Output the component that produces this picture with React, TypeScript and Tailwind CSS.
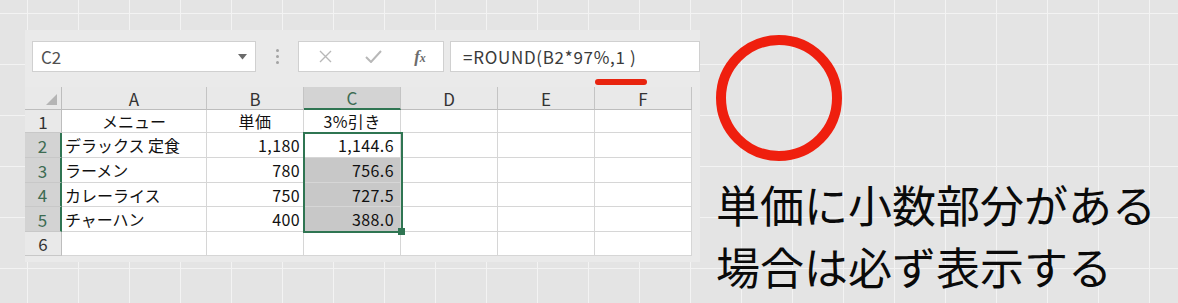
import React from "react";

const FONT = { fontFamily: '"Noto Sans CJK JP", "Noto Sans", sans-serif' };

type Row = { n: string; h: string; a: string; b: string; c: string };

const rows: Row[] = [
  { n: "1", h: "h-[23px]", a: "メニュー", b: "単価", c: "3%引き" },
  { n: "2", h: "h-[25px]", a: "デラックス 定食", b: "1,180", c: "1,144.6" },
  { n: "3", h: "h-[25px]", a: "ラーメン", b: "780", c: "756.6" },
  { n: "4", h: "h-[24px]", a: "カレーライス", b: "750", c: "727.5" },
  { n: "5", h: "h-[25px]", a: "チャーハン", b: "400", c: "388.0" },
  { n: "6", h: "h-[24px]", a: "", b: "", c: "" },
];

const cols = ["A", "B", "C", "D", "E", "F"];
const colW = ["w-[145px]", "w-[97px]", "w-[97px]", "w-[97px]", "w-[97px]", "w-[97px]"];

function Toolbar() {
  return (
    <div className="flex items-start h-[57px] pt-[11px] pl-[7px]">
      <div className="w-[224px] h-[31px] bg-white border border-[#d0d0d0] flex items-center justify-between pl-[8px] pr-[8px]">
        <span className="text-[17px] text-[#505050] leading-none">C2</span>
        <svg width="9" height="6" viewBox="0 0 9 6">
          <path d="M0 0 L9 0 L4.5 5.5 Z" fill="#6a6a6a" />
        </svg>
      </div>
      <div className="w-[42px] h-[31px] flex flex-col items-center justify-center gap-[3px]">
        <div className="w-[3px] h-[3px] rounded-full bg-[#a3a3a3]" />
        <div className="w-[3px] h-[3px] rounded-full bg-[#a3a3a3]" />
        <div className="w-[3px] h-[3px] rounded-full bg-[#a3a3a3]" />
      </div>
      <div className="w-[146px] h-[31px] bg-white border border-[#d0d0d0] flex items-center">
        <div className="w-[48px] flex justify-center pl-[4px]">
          <svg width="13" height="13" viewBox="0 0 13 13">
            <path d="M1 1 L12 12 M12 1 L1 12" stroke="#b8b8b8" strokeWidth="1.4" />
          </svg>
        </div>
        <div className="w-[48px] flex justify-center pl-[4px]">
          <svg width="17" height="13" viewBox="0 0 17 13">
            <path d="M1 7 L6 12 L16 1" stroke="#b8b8b8" strokeWidth="2" fill="none" />
          </svg>
        </div>
        <div className="w-[48px] flex justify-center pl-[2px]">
          <span
            className="italic text-[17px] text-[#6c6c6c] leading-none font-bold"
            style={{ fontFamily: '"Liberation Serif", serif' }}
          >
            f<span className="text-[12px]">x</span>
          </span>
        </div>
      </div>
      <div className="w-[6px]" />
      <div className="flex-1 h-[31px] bg-white border border-[#d0d0d0] flex items-center pl-[12px]">
        <span className="text-[17px] text-[#3a3a3a] leading-none tracking-[0.7px]">=ROUND(B2*97%,1 )</span>
      </div>
    </div>
  );
}

function Sheet() {
  return (
    <div className="relative">
      <div className="flex h-[23px]">
        <div className="w-[37px] h-full bg-[#e9e9e9] border-r border-b border-[#bdbdbd] relative">
          <svg className="absolute right-[4px] bottom-[4px]" width="11" height="11" viewBox="0 0 11 11">
            <path d="M11 0 L11 11 L0 11 Z" fill="#b5b5b5" />
          </svg>
        </div>
        {cols.map((c, i) => {
          const sel = c === "C";
          return (
            <div
              key={c}
              className={
                colW[i] +
                " h-full flex items-center justify-center text-[17px] leading-none border-r border-[#c4c4c4] " +
                (sel
                  ? "bg-[#d3d3d3] text-[#3d6b52] border-b-2 border-b-[#2f7552]"
                  : "bg-[#e9e9e9] text-[#333333] border-b border-b-[#bdbdbd]")
              }
            >
              {c}
            </div>
          );
        })}
      </div>
      {rows.map((r) => {
        const rowSel = ["2", "3", "4", "5"].includes(r.n);
        const header = r.n === "1";
        return (
          <div key={r.n} className={"flex " + r.h}>
            <div
              className={
                "w-[37px] h-full flex items-center justify-center text-[17px] leading-none border-b border-[#c8c8c8] " +
                (rowSel
                  ? "bg-[#d3d3d3] text-[#3d6b52] border-r-2 border-r-[#2f7552]"
                  : "bg-[#e9e9e9] text-[#333333] border-r border-r-[#bdbdbd]")
              }
            >
              {r.n}
            </div>
            <div
              className={
                "w-[145px] h-full bg-white border-r border-b border-[#d6d6d6] flex items-center text-[16px] text-[#111] " +
                (header ? "justify-center" : "pl-[3px]")
              }
            >
              {r.a}
            </div>
            <div
              className={
                "w-[97px] h-full bg-white border-r border-b border-[#d6d6d6] flex items-center text-[16px] text-[#111] tracking-[0.4px] " +
                (header ? "justify-center" : "justify-end pr-[3px]")
              }
            >
              {r.b}
            </div>
            <div
              className={
                "w-[97px] h-full border-r border-b border-[#d6d6d6] flex items-center text-[16px] text-[#111] tracking-[0.4px] " +
                (header ? "justify-center " : "justify-end pr-[6px] ") +
                (["3", "4", "5"].includes(r.n) ? "bg-[#c8c8c8]" : "bg-white")
              }
            >
              {r.c}
            </div>
            <div className="w-[97px] h-full bg-white border-r border-b border-[#d6d6d6]" />
            <div className="w-[97px] h-full bg-white border-r border-b border-[#d6d6d6]" />
            <div className="w-[97px] h-full bg-white border-r border-b border-[#d6d6d6]" />
          </div>
        );
      })}
      <div className="absolute left-[278px] top-[45px] w-[100px] h-[101px] border-2 border-[#2f7552] pointer-events-none" />
      <div className="absolute left-[373px] top-[141px] w-[7px] h-[7px] bg-[#2f7552]" />
    </div>
  );
}

export default function App() {
  return (
    <div
      className="relative w-[1178px] h-[303px] overflow-hidden bg-[#e4e4e4] bg-[linear-gradient(to_right,#f3f3f3_1px,transparent_1px),linear-gradient(to_bottom,#f3f3f3_1px,transparent_1px)] bg-[size:51px_51px] bg-[position:27px_13px] flex pl-[25px] pt-[30px]"
      style={FONT}
    >
      <div className="w-[675px] h-[232px] bg-[#eaeaea]">
        <Toolbar />
        <Sheet />
      </div>
      <div className="ml-[16px] flex flex-col">
        <div className="mt-[5px] w-[126px] h-[126px] rounded-full border-[10px] border-[#ef1f0e]" />
        <div className="mt-[12px] text-[44px] leading-[62px] text-[#0a0a0a] whitespace-nowrap">
          <div>単価に小数部分がある</div>
          <div>場合は必ず表示する</div>
        </div>
      </div>
      <div className="absolute left-[595px] top-[79px] w-[52px] h-[6px] rounded-full bg-[#e8240f]" />
    </div>
  );
}
